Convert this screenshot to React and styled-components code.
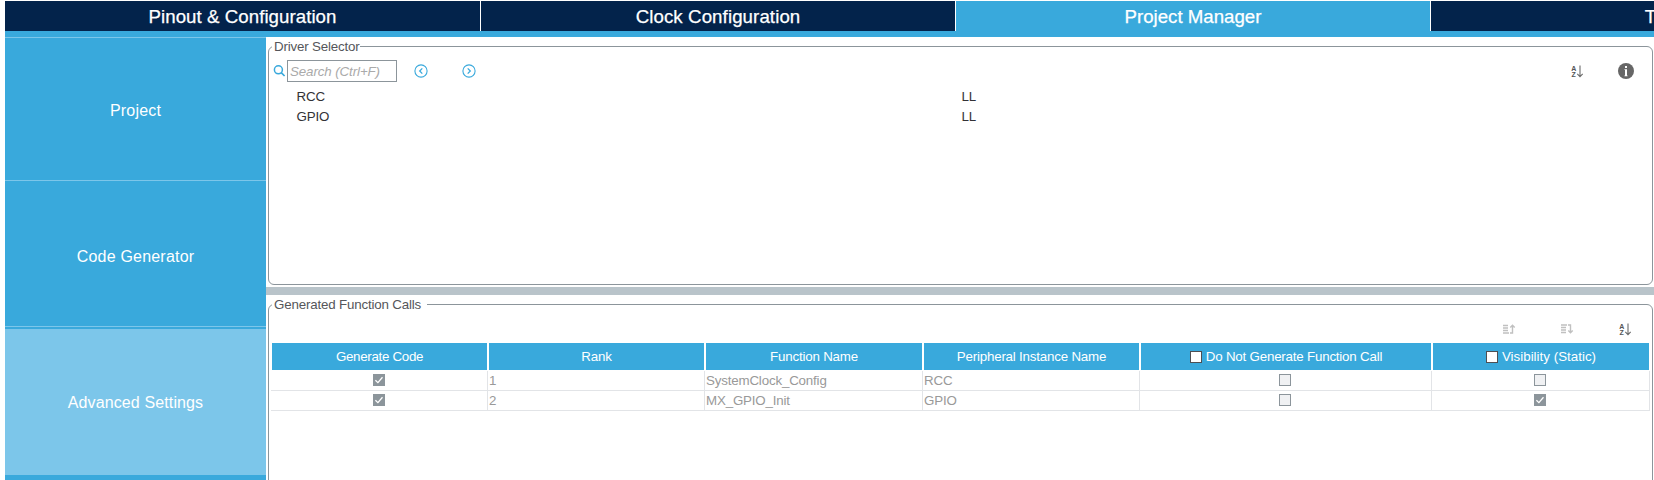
import React from "react";
import styled, { createGlobalStyle } from "styled-components";

const navy = "#03234b";
const blue = "#39a9dc";
const sky = "#7cc6ea";
const steel = "#8c959b";
const grid = "#e2e4e7";

const GlobalStyle = createGlobalStyle`
  * { box-sizing: border-box; }
  body {
    margin: 0;
    background: #fff;
    font: 13.33px/15px "Liberation Sans", Arial, sans-serif;
    letter-spacing: -0.17px;
  }
  svg { display: block; flex: none; overflow: visible; }
`;

const Window = styled.div`
  width: 1654px;
  height: 480px;
  padding: 1px 0 0 5px;
  overflow: hidden;
  display: flex;
  flex-direction: column;
`;

const TabBar = styled.nav`
  flex: none;
  display: flex;
  height: 36px;
  border-bottom: 6px solid ${blue};
  overflow: hidden;
`;

const Tab = styled.div`
  flex: none;
  width: 475px;
  height: 30px;
  padding-top: 1px;
  text-align: center;
  border-left: ${(p) => (p.$first ? "0" : "1px solid #fff")};
  background: ${(p) => (p.$active ? blue : navy)};
  color: #fff;
  font-size: 18.67px;
  line-height: 30px;
  letter-spacing: ${(p) => p.$track || 0}px;
  -webkit-text-stroke: 0.25px #fff;
`;

const Body = styled.div`
  flex: 1;
  min-height: 0;
  display: flex;
`;

const Sidebar = styled.aside`
  flex: none;
  width: 261px;
  background: ${blue};
`;

const SideItem = styled.div`
  height: 146px;
  padding-top: 2px;
  display: flex;
  align-items: center;
  justify-content: center;
  color: #fff;
  font-size: 16px;
  line-height: 20px;
  letter-spacing: ${(p) => p.$track || 0}px;
  background: ${(p) => (p.$active ? sky : blue)};
  box-shadow: ${(p) => (p.$active ? "none" : `inset 0 ${p.$first ? 1 : 0}px 0 ${sky}, inset 0 -2px 0 ${blue}, inset 0 -3px 0 ${sky}`)};
`;

const Main = styled.main`
  flex: 1;
  min-width: 0;
  display: flex;
  flex-direction: column;
`;

const Pane = styled.section`
  flex: none;
  height: ${(p) => p.$height}px;
  padding: 9px 1px 2px 2px;
`;

const Splitter = styled.div`
  flex: none;
  height: 8px;
  background: #b9c4ca;
`;

const Group = styled.div`
  height: 100%;
  border: 1px solid ${steel};
  border-radius: 6px;
`;

const Legend = styled.div`
  width: ${(p) => p.$width}px;
  height: 15px;
  margin: -8px 0 0 3px;
  padding-left: 2px;
  background: #fff;
  color: #55565a;
  white-space: nowrap;
`;

const SearchBar = styled.div`
  height: 22px;
  margin: 6px 18px 0 4px;
  display: flex;
  align-items: center;
`;

const SearchInput = styled.div`
  width: 110px;
  height: 22px;
  margin: 0 17px 0 2px;
  padding-left: 2px;
  border: 1px solid ${steel};
  color: #aaa;
  font-style: italic;
  line-height: 21px;
  letter-spacing: -0.1px;
  white-space: nowrap;
`;

const Spacer = styled.div`
  width: ${(p) => (p.$width ? `${p.$width}px` : "auto")};
  flex: ${(p) => (p.$width ? "none" : "1")};
`;

const DriverList = styled.div`
  padding: 5px 0 0 27.5px;
`;

const DriverRow = styled.div`
  display: grid;
  grid-template-columns: 665px 1fr;
  height: 20px;
  line-height: 20px;
  color: #323236;
`;

const Tools = styled.div`
  height: 12px;
  margin: 11px 21px 0 0;
  display: flex;
  align-items: center;
  justify-content: flex-end;
  gap: 46px;
`;

const Table = styled.div`
  margin: 8px 2px 0 2px;
`;

const TableRow = styled.div`
  display: grid;
  grid-template-columns: 217px 217px 218px 217px 292px 218px;
  width: 1379px;
`;

const HeadRow = styled(TableRow)`
  height: 28px;
  padding-bottom: 1px;
`;

const HeadCell = styled.div`
  margin: 0 1px;
  display: flex;
  align-items: center;
  justify-content: center;
  gap: 4px;
  background: ${blue};
  color: #fff;
  letter-spacing: ${(p) => p.$track ?? -0.2}px;
  white-space: nowrap;
`;

const Cell = styled.div`
  height: 20px;
  padding: ${(p) => (p.$center ? "0 0 1px" : "0 0 0 1px")};
  padding-right: ${(p) => (p.$odd ? 1 : 0)}px;
  display: flex;
  align-items: center;
  justify-content: ${(p) => (p.$center ? "center" : "flex-start")};
  border-right: 1px solid ${grid};
  border-bottom: 1px solid ${grid};
  color: #999;
`;

const boxLook = {
  head: ["#fff", "#4d4f53"],
  off: ["#f0f1f3", steel],
  on: [steel, steel],
};

const Box = styled.span`
  flex: none;
  width: 12px;
  height: 12px;
  display: grid;
  place-items: center;
  background: ${(p) => boxLook[p.$look][0]};
  border: 1px solid ${(p) => boxLook[p.$look][1]};
`;

const Check = ({ look }) => (
  <Box $look={look}>
    {look === "on" && (
      <svg width="10" height="10" viewBox="0 0 10 10">
        <path d="M1.4 5.2 3.9 7.6 8.5 2.3" fill="none" stroke="#fff" strokeWidth="1.3" />
      </svg>
    )}
  </Box>
);

const SearchIcon = () => (
  <svg width="12" height="12" viewBox="0 0 12 12" fill="none" stroke={blue}>
    <circle cx="5.4" cy="4.8" r="4" strokeWidth="1.5" />
    <path d="M8.2 7.6 11.6 11" strokeWidth="1.7" />
  </svg>
);

const CircleArrow = ({ d }) => (
  <svg width="14" height="14" viewBox="0 0 14 14" fill="none" stroke={blue}>
    <circle cx="7" cy="7" r="6.1" strokeWidth="1.1" />
    <path d={d} strokeWidth="1.3" />
  </svg>
);

const SortIcon = () => (
  <svg width="12" height="13" viewBox="0 0 12 13">
    <g fontFamily="Liberation Sans, Arial, sans-serif" fontWeight="700" fontSize="7" letterSpacing="0" fill="#555">
      <text x="0.2" y="5.6">A</text>
      <text x="0.5" y="12.2">Z</text>
    </g>
    <path d="M9 0.5V11.5M6.3 8.9 9 11.6 11.7 8.9" fill="none" stroke="#6c6c6c" strokeWidth="1.1" />
  </svg>
);

const InfoIcon = () => (
  <svg width="16" height="16" viewBox="0 0 16 16">
    <circle cx="8" cy="8" r="8" fill="#666" />
    <path d="M7 3h2v2H7zM6.5 6.3H9V12.5h.6v.8H6.4v-.8H7V7.1h-.5z" fill="#fff" />
  </svg>
);

const MoveIcon = ({ down }) => (
  <svg width="12" height="10" viewBox="0 0 12 10" fill="none" stroke="#c0c0c0">
    {down ? (
      <path d="M0 1h6M0 3.5h5M0 6h5M0 8.5h5M7 1h2.5V8.5M7.3 6.5 9.5 8.8 11.7 6.5" strokeWidth="1.4" />
    ) : (
      <path d="M0 1.5h5M0 4h5M0 6.5h5M0 9h6M7 9h2.5V1.5M7.3 3.5 9.5 1.2 11.7 3.5" strokeWidth="1.4" />
    )}
  </svg>
);

const columns = [
  { title: "Generate Code", track: -0.3 },
  { title: "Rank" },
  { title: "Function Name" },
  { title: "Peripheral Instance Name" },
  { title: "Do Not Generate Function Call", check: true },
  { title: "Visibility (Static)", check: true, track: 0.02 },
];

const calls = [
  [true, "1", "SystemClock_Config", "RCC", false, false],
  [true, "2", "MX_GPIO_Init", "GPIO", false, true],
];

const drivers = [
  ["RCC", "LL"],
  ["GPIO", "LL"],
];

export default function App() {
  return (
    <Window>
      <GlobalStyle />
      <TabBar>
        <Tab $first $track={0.06}>Pinout &amp; Configuration</Tab>
        <Tab $track={0.1}>Clock Configuration</Tab>
        <Tab $active>Project Manager</Tab>
        <Tab $track={0.6}>Tools</Tab>
      </TabBar>
      <Body>
        <Sidebar>
          <SideItem $first $track={0.2}>Project</SideItem>
          <SideItem $track={0.2}>Code Generator</SideItem>
          <SideItem $active $track={0.12}>Advanced Settings</SideItem>
        </Sidebar>
        <Main>
          <Pane $height={250}>
            <Group>
              <Legend $width={88}>Driver Selector</Legend>
              <SearchBar>
                <SearchIcon />
                <SearchInput>Search (Ctrl+F)</SearchInput>
                <CircleArrow d="M8.3 4.4 5.7 7l2.6 2.6" />
                <Spacer $width={34} />
                <CircleArrow d="M5.7 4.4 8.3 7 5.7 9.6" />
                <Spacer />
                <SortIcon />
                <Spacer $width={35} />
                <InfoIcon />
              </SearchBar>
              <DriverList>
                {drivers.map(([name, lib]) => (
                  <DriverRow key={name}>
                    <span>{name}</span>
                    <span>{lib}</span>
                  </DriverRow>
                ))}
              </DriverList>
            </Group>
          </Pane>
          <Splitter />
          <Pane $height={250}>
            <Group>
              <Legend $width={155}>Generated Function Calls</Legend>
              <Tools>
                <MoveIcon />
                <MoveIcon down />
                <SortIcon />
              </Tools>
              <Table>
                <HeadRow>
                  {columns.map((c) => (
                    <HeadCell key={c.title} $track={c.track}>
                      {c.check && <Check look="head" />}
                      {c.title}
                    </HeadCell>
                  ))}
                </HeadRow>
                {calls.map((row) => (
                  <TableRow key={row[1]}>
                    {row.map((v, i) => (
                      <Cell key={i} $center={typeof v === "boolean"} $odd={columns[i].check}>
                        {typeof v === "boolean" ? <Check look={v ? "on" : "off"} /> : v}
                      </Cell>
                    ))}
                  </TableRow>
                ))}
              </Table>
            </Group>
          </Pane>
        </Main>
      </Body>
    </Window>
  );
}
